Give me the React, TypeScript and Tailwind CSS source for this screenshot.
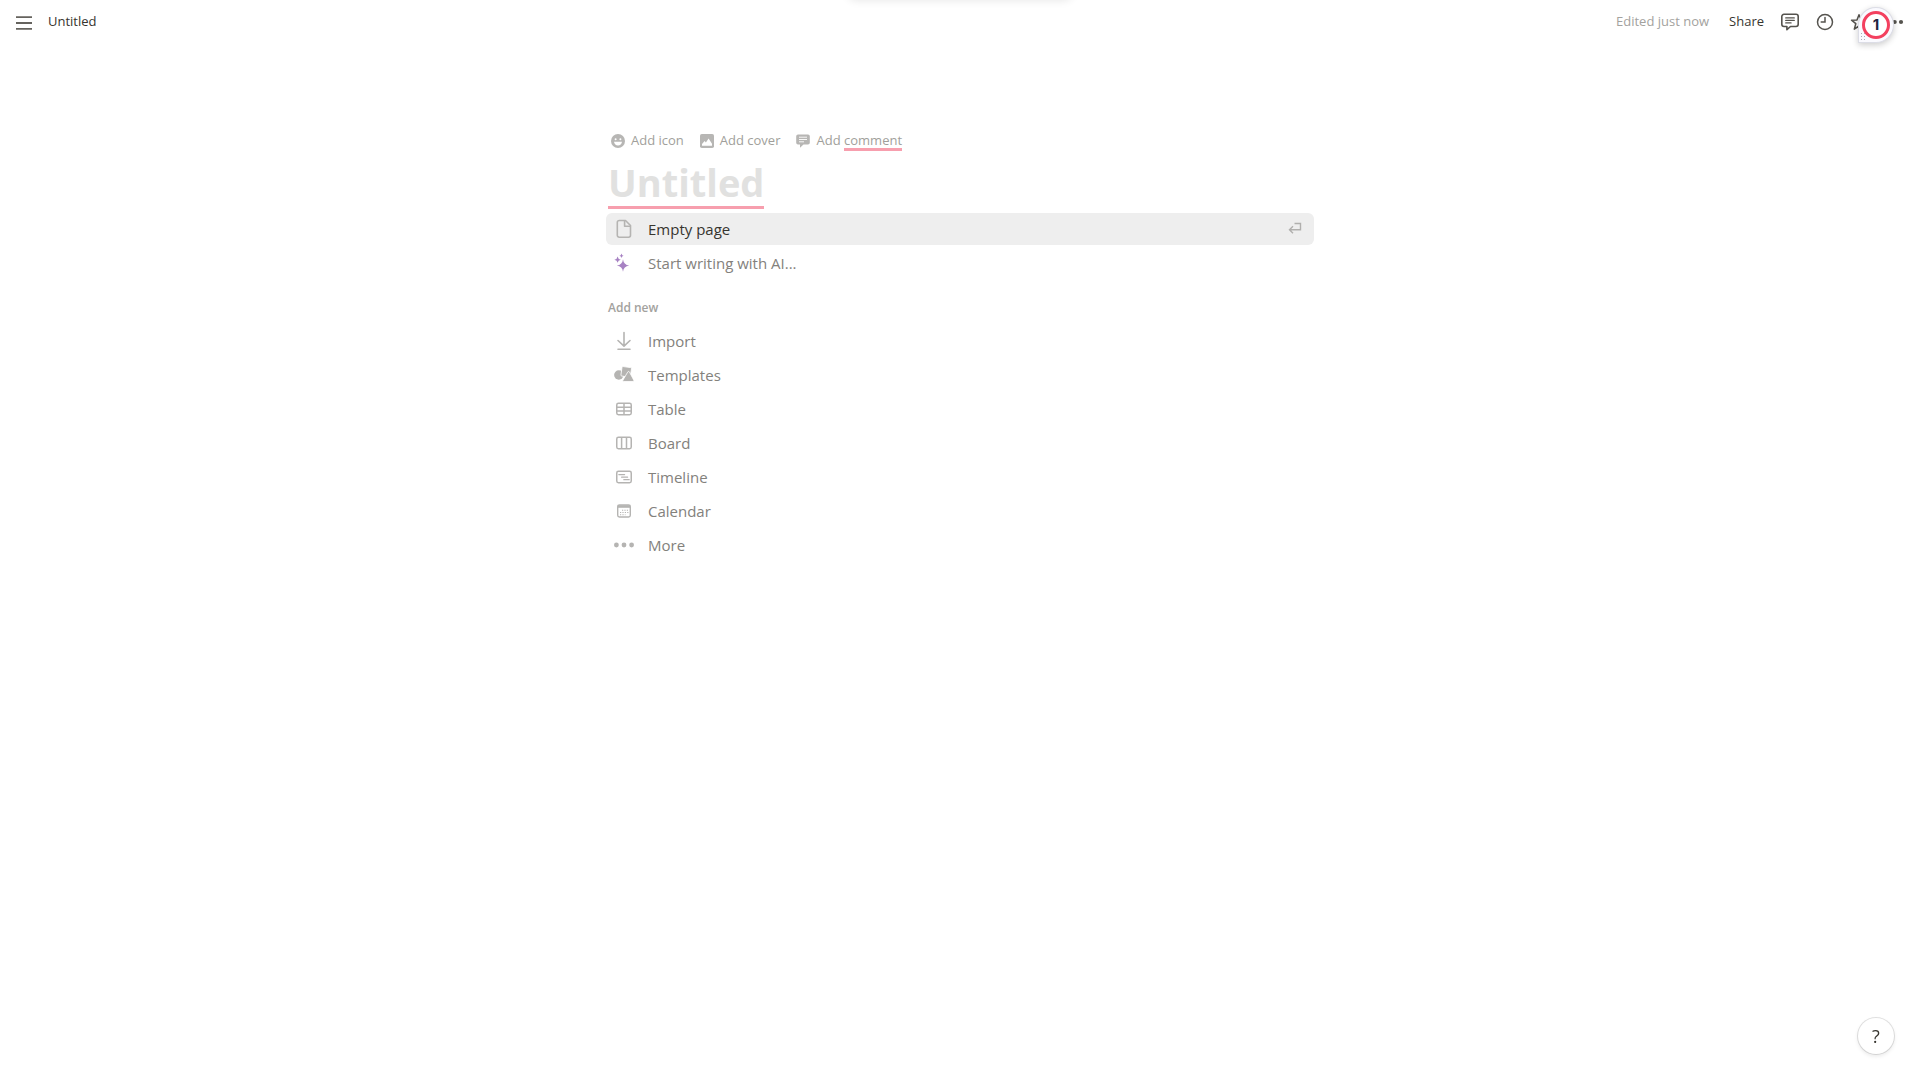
import type { ReactNode } from "react";

const menuIcon = "size-5 shrink-0";

function Row({ icon, label, active, trailing }: { icon: ReactNode; label: string; active?: boolean; trailing?: ReactNode }) {
  return (
    <li>
      <button
        type="button"
        className={
          active
            ? "flex h-8 w-full items-center rounded-md bg-[#eeeeee] px-2 text-[15px] text-[#37352f]"
            : "flex h-8 w-full items-center rounded-md px-2 text-[15px] text-[#83817c]"
        }
      >
        <span className="mr-3.5 flex h-5 w-5 items-center justify-center text-[#b5b4b2]">{icon}</span>
        <span className="flex-1 text-left">{label}</span>
        {trailing}
      </button>
    </li>
  );
}

const PageIcon = () => (
  <svg viewBox="0 0 20 20" className={menuIcon} fill="none" stroke="currentColor" strokeWidth="1.6" strokeLinejoin="round">
    <path d="M5.2 1.5h6.3l5 5v9.8a1.9 1.9 0 0 1-1.9 1.9H5.2a1.9 1.9 0 0 1-1.9-1.9V3.4a1.9 1.9 0 0 1 1.9-1.9z" />
    <path d="M10.6 1.8v5.5h5.6" />
  </svg>
);

const SparkleIcon = () => (
  <svg viewBox="0 0 20 20" className={menuIcon} fill="#a782c3">
    <path d="M9 6.2q.6 5.6 6.2 6.3-5.6.7-6.2 6.3-.6-5.6-6.2-6.3 5.6-.7 6.2-6.3z" />
    <path d="M3.6 3.6q.4 2.7 3.2 3.1-2.8.4-3.2 3.1-.4-2.7-3.2-3.1 2.8-.4 3.2-3.1z" />
    <path d="M7.5.6q.3 1.9 2.1 2.2-1.8.3-2.1 2.2-.3-1.9-2.1-2.2 1.8-.3 2.1-2.2z" />
  </svg>
);

const ImportIcon = () => (
  <svg viewBox="0 0 20 20" className={menuIcon} fill="none" stroke="currentColor" strokeWidth="1.6" strokeLinecap="round" strokeLinejoin="round">
    <path d="M10 1.5v13.500M4 9.5l6 5.7 6-5.7M4 18.2h12" />
  </svg>
);

const TemplatesIcon = () => (
  <svg viewBox="0 0 20 20" className={menuIcon} fill="currentColor">
    <circle cx="4.800" cy="10" r="4.700" />
    <rect x="7.400" y="2" width="9.600" height="9.600" rx="1" transform="rotate(8 12 7)" stroke="#fff" strokeWidth=".8" />
    <path d="M13.800 6.900a.9.9 0 0 1 1.600 0l4.400 8.300a.9.9 0 0 1-.8 1.300h-9.300a.9.9 0 0 1-.8-1.300z" stroke="#fff" strokeWidth=".8" />
  </svg>
);

const TableIcon = () => (
  <svg viewBox="0 0 20 20" className={menuIcon} fill="none" stroke="currentColor" strokeWidth="1.5">
    <rect x="2.750" y="4.250" width="14.500" height="11.500" rx="1.700" />
    <path d="M2.700 8.200h14.600M2.700 12h14.600M10 4.500v11" />
  </svg>
);

const BoardIcon = () => (
  <svg viewBox="0 0 20 20" className={menuIcon} fill="none" stroke="currentColor" strokeWidth="1.5">
    <rect x="2.750" y="4.250" width="14.500" height="11.500" rx="1.700" />
    <path d="M7.600 4.500v11M12.500 4.500v11" />
  </svg>
);

const TimelineIcon = () => (
  <svg viewBox="0 0 20 20" className={menuIcon} fill="none" stroke="currentColor" strokeWidth="1.5">
    <rect x="2.750" y="4.250" width="14.500" height="11.500" rx="1.700" />
    <path d="M4.800 7.600h5.800M7.600 10.200h6M9.800 12.700h5.400" strokeWidth="1.200" strokeLinecap="round" />
  </svg>
);

const CalendarIcon = () => (
  <svg viewBox="0 0 20 20" className={menuIcon} fill="none" stroke="currentColor" strokeWidth="1.4">
    <rect x="3.700" y="4" width="12.600" height="12" rx="1.700" />
    <path d="M3.700 5.500h12.600" strokeWidth="2.600" />
    <path d="M8 9.200h6.500M6 11.500h8.500M6 13.700h5.500" strokeDasharray="1.200 1.200" strokeWidth="1.100" />
  </svg>
);

const MoreIcon = () => (
  <svg viewBox="0 0 20 20" className={menuIcon} fill="currentColor">
    <circle cx="2.400" cy="10" r="2.400" />
    <circle cx="10" cy="10" r="2.400" />
    <circle cx="17.600" cy="10" r="2.400" />
  </svg>
);

const ReturnIcon = () => (
  <svg viewBox="0 0 14 14" className="mr-1 size-3.5" fill="none" stroke="#b0afad" strokeWidth="1.4">
    <path d="M6.500 1.500h6v6.300H1.800M5 4.300 1.500 7.800 5 11.300" />
  </svg>
);

const addNew = [
  { label: "Import", icon: <ImportIcon /> },
  { label: "Templates", icon: <TemplatesIcon /> },
  { label: "Table", icon: <TableIcon /> },
  { label: "Board", icon: <BoardIcon /> },
  { label: "Timeline", icon: <TimelineIcon /> },
  { label: "Calendar", icon: <CalendarIcon /> },
  { label: "More", icon: <MoreIcon /> },
];

function TopBar() {
  return (
    <header className="flex h-11 items-center justify-between px-4 text-[13px] text-[#37352f]">
      <div className="flex items-center gap-4">
        <button type="button" aria-label="Open sidebar" className="pt-0.5">
          <svg viewBox="0 0 16 14" className="h-3.5 w-4" stroke="#65635e" strokeWidth="1.8">
            <path d="M0 1.100h16M0 7h16M0 12.900h16" />
          </svg>
        </button>
        <a href="#untitled">Untitled</a>
      </div>
      <div className="flex items-center">
        <span className="mr-5 text-[#a3a29e]">Edited just now</span>
        <button type="button" className="mr-4">Share</button>
        <button type="button" aria-label="Comments" className="mr-4">
          <svg viewBox="0 0 20 20" className="size-5" fill="none" stroke="#55534e" strokeWidth="1.6" strokeLinecap="round" strokeLinejoin="round">
            <path d="M4 2.300h12a2.200 2.200 0 0 1 2.200 2.200v7.800a2.200 2.200 0 0 1-2.200 2.200h-5.500l-3.600 3.200v-3.200H4a2.200 2.200 0 0 1-2.200-2.200V4.500A2.200 2.200 0 0 1 4 2.300z" />
            <path d="M5.700 5.900h8.600M5.700 8.400h8.600M5.700 10.900h5.400" strokeWidth="1.200" />
          </svg>
        </button>
        <button type="button" aria-label="Updates" className="mr-4">
          <svg viewBox="0 0 18 18" className="size-[18px]" fill="none" stroke="#55534e" strokeWidth="1.5" strokeLinecap="round">
            <circle cx="9" cy="9" r="7.500" />
            <path d="M9 4.500V9H5.200" />
          </svg>
        </button>
        <button type="button" aria-label="Favorite" className="mr-[18px]">
          <svg viewBox="0 0 18 18" className="size-[18px]" fill="none" stroke="#55534e" strokeWidth="1.5" strokeLinejoin="round">
            <path d="m9 1.700 2 5.200 5.500.3-4.300 3.500 1.500 5.400L9 13l-4.700 3.100 1.500-5.400L1.500 7.200 7 6.900z" />
          </svg>
        </button>
        <button type="button" aria-label="More actions">
          <svg viewBox="0 0 18 18" className="size-[18px]" fill="#55534e">
            <circle cx="2.500" cy="9" r="2.100" />
            <circle cx="8.700" cy="9" r="2.100" />
            <circle cx="15" cy="9" r="2.100" />
          </svg>
        </button>
      </div>
    </header>
  );
}

export default function App() {
  return (
    <div className="relative min-h-screen overflow-hidden bg-white font-['Open_Sans',sans-serif]">
      <div className="absolute -top-4 left-1/2 h-4 w-56 -translate-x-1/2 rounded-lg shadow-[0_0_10px_rgba(0,0,0,0.11)]" />
      <TopBar />
      <button
        type="button"
        aria-label="1 writing suggestion"
        className="absolute top-[7px] right-[26px] flex size-9 items-center justify-center rounded-full rounded-bl-[3px] border border-[#dcdde6] bg-[#fafaff] shadow-[0_2px_6px_rgba(0,0,0,0.2)]"
      >
        <span className="flex size-7 items-center justify-center rounded-full border-[3px] border-[#f3405f] bg-white font-['Inter',sans-serif] text-[15px] font-bold text-[#23233f]">
          1
        </span>
        <svg viewBox="0 0 4 7" className="absolute bottom-0.5 left-0.5 h-[7px] w-1" fill="#aaabb8">
          <path d="M0 0h1v1H0zM3 0h1v1H3zM0 3h1v1H0zM3 3h1v1H3zM0 6h1v1H0zM3 6h1v1H3z" />
        </svg>
      </button>

      <main className="mx-auto max-w-[708px] pt-[84px]">
        <div className="flex h-[26px] items-center gap-4 pl-[5px] text-[13px] text-[#a19f9b]">
          <button type="button" className="flex items-center gap-1.5">
            <svg viewBox="0 0 14 14" className="size-3.5" fill="#b7b6b4">
              <circle cx="7" cy="7" r="7" />
              <circle cx="4.600" cy="5.200" r="1" fill="#fff" />
              <circle cx="9.400" cy="5.200" r="1" fill="#fff" />
              <path d="M3 7.800h8c-.3 2.200-1.900 3.700-4 3.700s-3.700-1.500-4-3.700z" fill="#fff" />
            </svg>
            Add icon
          </button>
          <button type="button" className="flex items-center gap-1.5">
            <svg viewBox="0 0 14 14" className="size-3.5" fill="#b7b6b4">
              <rect width="14" height="14" rx="1.800" />
              <path d="M2 11.700V10l2.600-3 1.300 1.400L8.600 4.600 12 9.800v1.900z" fill="#fff" />
            </svg>
            Add cover
          </button>
          <button type="button" className="flex items-center gap-1.5">
            <svg viewBox="0 0 14 14" className="size-3.5" fill="#b7b6b4">
              <path d="M2 .5h10a1.800 1.800 0 0 1 1.800 1.800v6.500A1.800 1.800 0 0 1 12 10.600H7.500L4 13.700v-3.100H2A1.800 1.800 0 0 1 .2 8.800V2.300A1.800 1.800 0 0 1 2 .5z" />
              <path d="M3 3.200h8M3 5.500h8M3 7.800h5" stroke="#fff" strokeWidth=".9" />
            </svg>
            <span>
              Add{" "}
              <span className="relative">
                comment
                <span className="absolute inset-x-0 -bottom-0.5 h-[3px] bg-[#f79fae]" />
              </span>
            </span>
          </button>
        </div>

        <h1 id="untitled" className="mt-1 ml-0.5 w-fit border-b-[3px] border-[#f79fae] text-[38px] leading-[48px] font-bold text-[#e1e1e0]">
          Untitled
        </h1>

        <ul className="mt-1 flex flex-col gap-0.5">
          <Row icon={<PageIcon />} label="Empty page" active trailing={<ReturnIcon />} />
          <Row icon={<SparkleIcon />} label="Start writing with AI..." />
        </ul>

        <h2 className="mt-5 ml-0.5 text-xs leading-[18px] font-semibold text-[#a3a29e]">Add new</h2>
        <ul className="mt-2 flex flex-col gap-0.5">
          {addNew.map((item) => (
            <Row key={item.label} icon={item.icon} label={item.label} />
          ))}
        </ul>
      </main>

      <button
        type="button"
        aria-label="Help"
        className="fixed right-[26px] bottom-[26px] flex size-9 items-center justify-center rounded-full bg-white text-lg text-[#37352f] shadow-[0_0_0_1px_rgba(15,15,15,0.12),0_2px_4px_rgba(15,15,15,0.1)]"
      >
        ?
      </button>
    </div>
  );
}
